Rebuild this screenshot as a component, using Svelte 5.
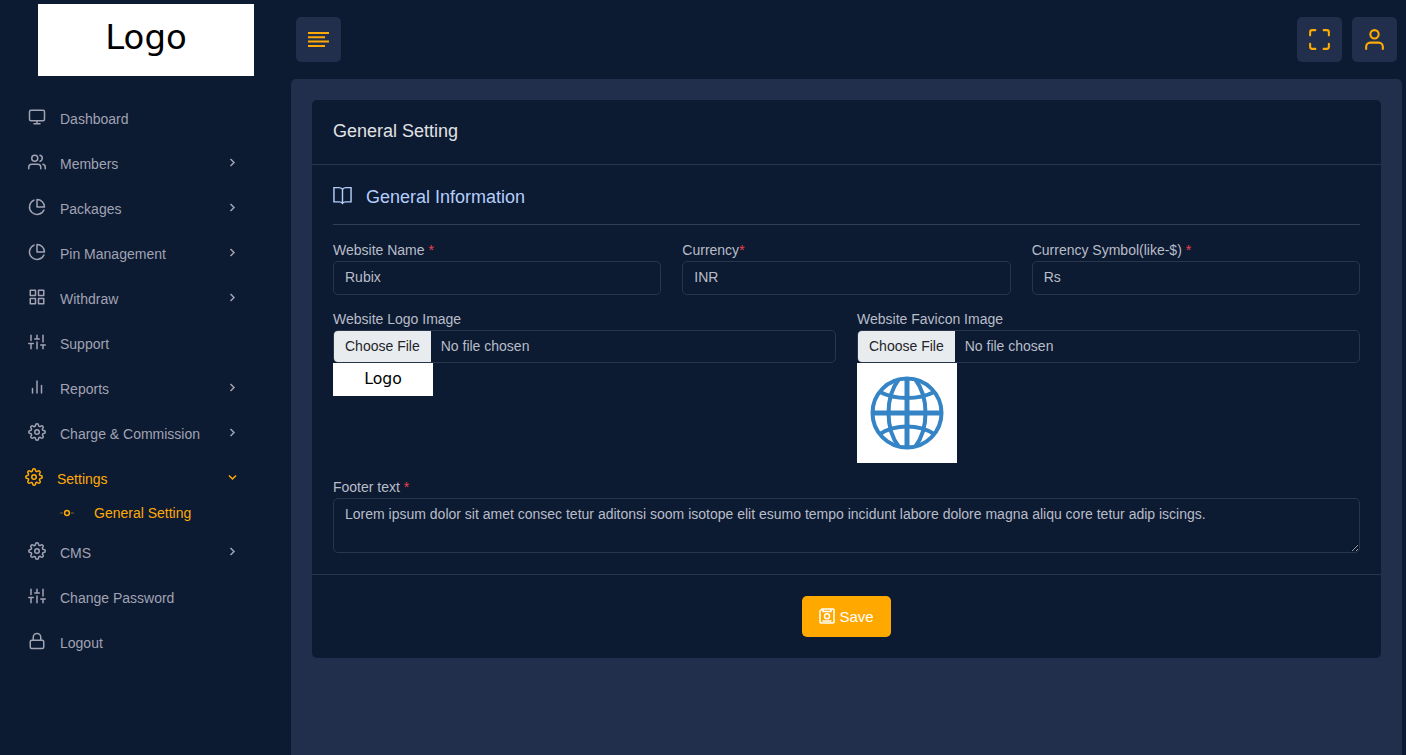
<script lang="ts">
  interface MenuItem {
    label:     string;
    icon:      string;
    children?: string[];
    expands?:  boolean;
    active?:   boolean;
  }

  const menu: MenuItem[] = [
    { label: 'Dashboard',           icon: 'monitor' },
    { label: 'Members',             icon: 'users',   expands: true },
    { label: 'Packages',            icon: 'pie',     expands: true },
    { label: 'Pin Management',      icon: 'pie',     expands: true },
    { label: 'Withdraw',            icon: 'grid',    expands: true },
    { label: 'Support',             icon: 'sliders' },
    { label: 'Reports',             icon: 'bars',    expands: true },
    { label: 'Charge & Commission', icon: 'gear',    expands: true },
    { label: 'Settings',            icon: 'gear',    expands: true, active: true, children: ['General Setting'] },
    { label: 'CMS',                 icon: 'gear',    expands: true },
    { label: 'Change Password',     icon: 'sliders' },
    { label: 'Logout',              icon: 'lock' },
  ];

  let websiteName = $state('Rubix');
  let currency = $state('INR');
  let symbol = $state('Rs');
  let footerText = $state(
    'Lorem ipsum dolor sit amet consec tetur aditonsi soom isotope elit esumo tempo incidunt labore dolore magna aliqu core tetur adip iscings.'
  );
</script>

{#snippet icon(name: string)}
  <svg class="icon" viewBox="0 0 24 24" aria-hidden="true">
    {#if name === 'monitor'}
      <rect x="2" y="3" width="20" height="14" rx="2" />
      <path d="M8 21h8M12 17v4" />
    {:else if name === 'users'}
      <path d="M17 21v-2a4 4 0 0 0-4-4H5a4 4 0 0 0-4 4v2" />
      <circle cx="9" cy="7" r="4" />
      <path d="M23 21v-2a4 4 0 0 0-3-3.87M16 3.13a4 4 0 0 1 0 7.75" />
    {:else if name === 'pie'}
      <path d="M21.21 15.89A10 10 0 1 1 8 2.83M22 12A10 10 0 0 0 12 2v10z" />
    {:else if name === 'grid'}
      <path d="M3 3h7v7H3zM14 3h7v7h-7zM14 14h7v7h-7zM3 14h7v7H3z" />
    {:else if name === 'sliders'}
      <path d="M4 21v-7M4 10V3M12 21v-9M12 8V3M20 21v-5M20 12V3M1 14h6M9 8h6M17 16h6" />
    {:else if name === 'bars'}
      <path d="M18 20V10M12 20V4M6 20v-6" />
    {:else if name === 'gear'}
      <circle cx="12" cy="12" r="3" />
      <path d="M19.4 15a1.65 1.65 0 0 0 .33 1.82l.06.06a2 2 0 0 1 0 2.83 2 2 0 0 1-2.83 0l-.06-.06a1.65 1.65 0 0 0-1.82-.33 1.65 1.65 0 0 0-1 1.51V21a2 2 0 0 1-2 2 2 2 0 0 1-2-2v-.09A1.65 1.65 0 0 0 9 19.4a1.65 1.65 0 0 0-1.82.33l-.06.06a2 2 0 0 1-2.83 0 2 2 0 0 1 0-2.83l.06-.06a1.65 1.65 0 0 0 .33-1.82 1.65 1.65 0 0 0-1.51-1H3a2 2 0 0 1-2-2 2 2 0 0 1 2-2h.09A1.65 1.65 0 0 0 4.6 9a1.65 1.65 0 0 0-.33-1.82l-.06-.06a2 2 0 0 1 0-2.83 2 2 0 0 1 2.83 0l.06.06a1.65 1.65 0 0 0 1.82.33H9a1.65 1.65 0 0 0 1-1.51V3a2 2 0 0 1 2-2 2 2 0 0 1 2 2v.09a1.65 1.65 0 0 0 1 1.51 1.65 1.65 0 0 0 1.82-.33l.06-.06a2 2 0 0 1 2.83 0 2 2 0 0 1 0 2.83l-.06.06a1.65 1.65 0 0 0-.33 1.82V9a1.65 1.65 0 0 0 1.51 1H21a2 2 0 0 1 2 2 2 2 0 0 1-2 2h-.09a1.65 1.65 0 0 0-1.51 1z" />
    {:else if name === 'lock'}
      <rect x="3" y="11" width="18" height="11" rx="2" />
      <path d="M7 11V7a5 5 0 0 1 10 0v4" />
    {:else if name === 'maximize'}
      <path d="M8 3H5a2 2 0 0 0-2 2v3M21 8V5a2 2 0 0 0-2-2h-3M16 21h3a2 2 0 0 0 2-2v-3M3 16v3a2 2 0 0 0 2 2h3" />
    {:else if name === 'user'}
      <path d="M20 21v-2a4 4 0 0 0-4-4H8a4 4 0 0 0-4 4v2" />
      <circle cx="12" cy="7" r="4" />
    {/if}
  </svg>
{/snippet}

{#snippet logo()}
  <svg class="logo" viewBox="0 0 216 72" role="img" aria-label="Logo">
    <rect width="216" height="72" fill="#fff" />
    <text x="108" y="45" text-anchor="middle">Logo</text>
  </svg>
{/snippet}

<div class="app">
  <aside class="sidebar">
    <a class="brand" href="#home">{@render logo()}</a>
    <nav>
      <ul class="menu">
        {#each menu as item}
          <li>
            <a class="link" class:active={item.active} href="#{item.icon}">
              {@render icon(item.icon)}
              <span class="label">{item.label}</span>
              {#if item.expands}
                <svg class="chevron" viewBox="0 0 10 10" aria-hidden="true">
                  <path d={item.active ? 'M2 3.500l3.500 3.500 3.500-3.500' : 'M3.500 2l3.500 3.500-3.500 3.500'} />
                </svg>
              {/if}
            </a>
            {#if item.children}
              <ul class="submenu">
                {#each item.children as child}
                  <li>
                    <a href="#general">
                      <svg class="bullet" viewBox="0 0 14 14" aria-hidden="true">
                        <circle cx="7" cy="7" r="2.4" />
                        <path d="M0 7h3M11 7h3" />
                      </svg>
                      {child}
                    </a>
                  </li>
                {/each}
              </ul>
            {/if}
          </li>
        {/each}
      </ul>
    </nav>
  </aside>

  <div class="main">
    <header class="topbar">
      <button class="tool" type="button" aria-label="Toggle menu">
        <svg class="lines" viewBox="0 0 21 17" aria-hidden="true">
          <path d="M0 2h21M0 6.300h17M0 10.600h21M0 14.900h17" />
        </svg>
      </button>
      <div class="tools">
        <button class="tool" type="button" aria-label="Full screen">{@render icon('maximize')}</button>
        <button class="tool" type="button" aria-label="Account">{@render icon('user')}</button>
      </div>
    </header>

    <main class="content">
      <form class="card" onsubmit={(e) => e.preventDefault()}>
        <div class="card-head"><h1>General Setting</h1></div>

        <div class="card-body">
          <h2>
            <svg class="book" viewBox="0 0 20 20" aria-hidden="true">
              <path d="M10 3.500C9 2.300 7.600 1.700 6 1.700H1v15h5.500c1.600 0 2.800.5 3.500 1.500.7-1 1.900-1.500 3.500-1.500H19v-15h-5c-1.600 0-3 .6-4 1.800zM10 3.500v15" />
            </svg>
            General Information
          </h2>

          <div class="row thirds">
            <div class="field">
              <label for="name">Website Name <b>*</b></label>
              <input id="name" class="control" type="text" bind:value={websiteName} />
            </div>
            <div class="field">
              <label for="currency">Currency<b>*</b></label>
              <input id="currency" class="control" type="text" bind:value={currency} />
            </div>
            <div class="field">
              <label for="symbol">Currency Symbol(like-$) <b>*</b></label>
              <input id="symbol" class="control" type="text" bind:value={symbol} />
            </div>
          </div>

          <div class="row halves">
            <div class="field">
              <label for="logo">Website Logo Image</label>
              <input id="logo" class="control file" type="file" />
              <div class="preview">{@render logo()}</div>
            </div>
            <div class="field">
              <label for="favicon">Website Favicon Image</label>
              <input id="favicon" class="control file" type="file" />
              <div class="preview">
                <svg class="globe" viewBox="0 0 100 100" role="img" aria-label="Favicon">
                  <rect width="100" height="100" fill="#fff" />
                  <circle cx="50" cy="50" r="34.500" />
                  <path d="M50 15v70M15 50h70" stroke-width="5" />
                  <path d="M42 16C28 34 28 66 42 84M58 16C72 34 72 66 58 84" />
                  <path d="M23 29C38 37 62 37 77 29M23 71C38 61 62 61 77 71" />
                </svg>
              </div>
            </div>
          </div>

          <div class="field">
            <label for="footer">Footer text <b>*</b></label>
            <textarea id="footer" class="control" bind:value={footerText}></textarea>
          </div>
        </div>

        <div class="card-foot">
          <button class="save" type="submit">
            <svg viewBox="0 0 16 16" aria-hidden="true">
              <path d="M3 1h11a1 1 0 0 1 1 1v12a1 1 0 0 1-1 1H2a1 1 0 0 1-1-1V3zM4 1v2.500h8V1M3.500 13h9" />
              <circle cx="8" cy="8.200" r="2.500" />
            </svg>
            Save
          </button>
        </div>
      </form>
    </main>
  </div>
</div>

<style>
  :global(body) { background: #0c1a32; }

  .app {
    --bg: #0c1a32;
    --panel: #212f4c;
    --line: #28364d;
    --accent: #ffaa05;
    --muted: #a1a3b3;
    --text: #b9bdc8;
    display: flex;
    min-height: 100vh;
    background: var(--bg);
    color: var(--text);
    font: 14px/21px "Liberation Sans", Arial, sans-serif;
  }
  .app *, .app *::before { box-sizing: border-box; }

  svg { display: block; fill: none; stroke: currentColor; }
  a { color: inherit; text-decoration: none; }
  ul { list-style: none; margin: 0; padding: 0; }

  .icon {
    flex: none;
    width: 18px; height: 18px;
    stroke-width: 2; stroke-linecap: round; stroke-linejoin: round;
  }
  .logo { width: 100%; height: auto; }
  .logo rect { stroke: none; }
  .logo text { fill: #000; stroke: none; font: 34px "DejaVu Sans", sans-serif; }

  /* Sidebar */
  .sidebar { flex: none; width: 291px; padding-top: 4px; }
  .brand { display: block; width: 216px; margin: 0 0 20px 38px; }
  .link {
    display: flex; align-items: center; gap: 14px;
    height: 45px;
    padding: 0 54px 0 28px;
    color: var(--muted);
  }
  .link .icon { margin-bottom: 4px; }
  .link.active { padding-left: 25px; color: var(--accent); }
  .label { flex: 1; padding-top: 2px; }
  .chevron { width: 10px; height: 10px; margin-bottom: 4px; stroke-width: 1.5; }

  .submenu { padding-bottom: 5px; color: var(--accent); }
  .submenu a { display: flex; align-items: center; gap: 20px; height: 24px; padding-left: 60px; }
  .bullet { width: 14px; height: 14px; stroke-width: 1.5; }
  .bullet path { stroke-width: 1; opacity: 0.5; }

  /* Top bar */
  .main { flex: 1; min-width: 0; display: flex; flex-direction: column; padding-right: 4px; }
  .topbar { display: flex; justify-content: space-between; padding: 17px 5px; }
  .tools { display: flex; gap: 10px; }
  .tool {
    display: flex; align-items: center; justify-content: center;
    width: 45px; height: 45px;
    padding: 0; border: 0; border-radius: 5px;
    background: var(--panel); color: var(--accent);
    cursor: pointer;
  }
  .tool .icon { width: 25px; height: 25px; }
  .lines { width: 21px; height: 17px; stroke-width: 2; }

  /* Card */
  .content { flex: 1; padding: 21px; border-radius: 5px 5px 0 0; background: var(--panel); }
  .card { border-radius: 5px; background: var(--bg); }
  .card-head { padding: 20px 21px 22px; border-bottom: 1px solid var(--line); }
  .card-body { padding: 21px; }
  .card-foot { display: flex; justify-content: center; padding: 21px; border-top: 1px solid var(--line); }
  h1, h2 { margin: 0; font-size: 18px; line-height: 22px; font-weight: 400; }
  h1 { color: #e0e2e4; }
  h2 {
    display: flex; align-items: center; gap: 14px;
    margin-bottom: 15px; padding-bottom: 16px;
    border-bottom: 1px solid #323e52;
    color: #b4cffb;
  }
  .book { width: 19px; height: 19px; margin-bottom: 3px; stroke-width: 1.5; }

  .row { display: grid; gap: 21px; margin-bottom: 14px; }
  .thirds { grid-template-columns: repeat(3, 1fr); }
  .halves { grid-template-columns: repeat(2, 1fr); }
  .field { display: flex; flex-direction: column; min-width: 0; }
  label b { color: #f04050; font-weight: 400; }

  .control {
    display: block;
    width: 100%; height: 34px;
    margin: 0; padding: 5px 11px 7px;
    border: 1px solid var(--line); border-radius: 5px;
    background: transparent; color: var(--text);
    font: inherit;
    outline: 0;
  }
  textarea.control { height: 55px; resize: vertical; }
  .file { height: 33px; padding: 0; line-height: 31px; overflow: hidden; }
  .file::file-selector-button {
    height: 31px;
    margin: 0 10px 0 0; padding: 0 11px;
    border: 0;
    background: #e9ecef; color: #212529;
    font: inherit;
  }
  .preview { width: 100px; }
  .globe { width: 100%; stroke: #3584c6; stroke-width: 4; }
  .globe rect { stroke: none; }

  .save {
    display: flex; align-items: center; gap: 4px;
    height: 41px;
    padding: 0 17px;
    border: 0; border-radius: 5px;
    background: #ffa800; color: #fff;
    font: 15px/24px "Liberation Sans", Arial, sans-serif;
    cursor: pointer;
  }
  .save svg { width: 16px; height: 16px; margin-bottom: 2px; stroke-width: 1.5; }
</style>
